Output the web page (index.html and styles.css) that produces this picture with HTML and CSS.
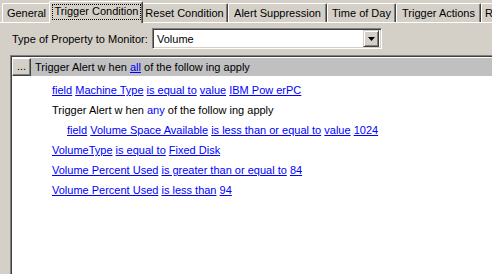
FILE: index.html
```html
<!DOCTYPE html>
<html lang="en">
<head>
    <meta charset="UTF-8">
    <title>Trigger Condition</title>
    <link rel="stylesheet" href="styles.css">
</head>
<body>
    <div class="tabs">
        <div class="tab">General</div>
        <div class="tab active"><span class="focus">Trigger Condition</span></div>
        <div class="tab">Reset Condition</div>
        <div class="tab">Alert Suppression</div>
        <div class="tab">Time of Day</div>
        <div class="tab">Trigger Actions</div>
        <div class="tab">R</div>
    </div>

    <div class="page">
        <div class="monitor">
            <span class="monitor-label">Type of Property to Monitor:</span>
            <div class="combo">
                <span class="combo-text">Volume</span>
                <span class="combo-btn">
                    <svg width="7" height="4" viewBox="0 0 7 4"><path d="M0 0H7L3.5 4Z" fill="#000"/></svg>
                </span>
            </div>
        </div>

        <div class="rules">
            <div class="rules-head">
                <span class="more">...</span>
                <span class="head-text">Trigger Alert w hen <a href="#">all</a> of the follow ing apply</span>
            </div>
            <div class="rules-body">
                <p class="rule"><a href="#">field</a> <a href="#">Machine Type</a> <a href="#">is equal to</a> <a href="#">value</a> <a href="#">IBM Pow erPC</a></p>
                <p class="rule">Trigger Alert w hen <a href="#" class="plain">any</a> of the follow ing apply</p>
                <p class="rule nested"><a href="#">field</a> <a href="#">Volume Space Available</a> <a href="#">is less than or equal to</a> <a href="#">value</a> <a href="#">1024</a></p>
                <p class="rule"><a href="#">VolumeType</a> <a href="#">is equal to</a> <a href="#">Fixed Disk</a></p>
                <p class="rule"><a href="#">Volume Percent Used</a> <a href="#">is greater than or equal to</a> <a href="#">84</a></p>
                <p class="rule"><a href="#">Volume Percent Used</a> <a href="#">is less than</a> <a href="#">94</a></p>
            </div>
        </div>
    </div>
</body>
</html>
```

FILE: styles.css
```css
body {
    margin: 0;
    height: 274px;
    overflow: hidden;
    background-color: #d4d0c8;
    font-family: "Liberation Sans", Arial, sans-serif;
    font-size: 11px;
    color: #000;
}

.tabs {
    display: flex;
    align-items: flex-end;
    height: 22px;
    padding-left: 2px;
    white-space: nowrap;
}

.tab {
    box-sizing: border-box;
    height: 19px;
    flex-shrink: 0;
    padding-top: 3px;
    text-align: center;
    border-top: 1px solid #fff;
    border-left: 1px solid #fff;
    border-right: 1px solid #404040;
    box-shadow: inset -1px 0 #808080;
    border-radius: 2px 2px 0 0;
    background-color: #d4d0c8;
}

.tab:nth-child(1) { width: 49px; }
.tab:nth-child(2) { width: 90px; }
.tab:nth-child(3) { width: 87px; }
.tab:nth-child(4) { width: 99px; }
.tab:nth-child(5) { width: 69px; }
.tab:nth-child(6) { width: 85px; }
.tab:nth-child(7) { width: 20px; text-align: left; padding-left: 3px; }

.tab.active {
    position: relative;
    z-index: 1;
    height: 22px;
    width: 94px;
    margin: 0 -2px -1px;
    padding: 2px 1px 0 2px;
}

.focus {
    display: block;
    height: 16px;
    line-height: 15px;
    outline: 1px dotted #000;
    outline-offset: -1px;
}

.page {
    border-top: 1px solid #fff;
    height: 251px;
}

.monitor {
    display: flex;
    align-items: center;
    margin-top: 5px;
    padding-left: 12px;
}

.monitor-label {
    width: 140px;
}

.combo {
    box-sizing: border-box;
    display: flex;
    align-items: center;
    justify-content: space-between;
    width: 230px;
    height: 21px;
    padding: 2px;
    background-color: #fff;
    border: 1px solid;
    border-color: #808080 #fff #fff #808080;
    box-shadow: inset 1px 1px #404040, inset -1px -1px #d4d0c8;
}

.combo-text {
    padding-left: 2px;
}

.combo-btn {
    box-sizing: border-box;
    display: flex;
    align-items: center;
    justify-content: center;
    width: 16px;
    height: 17px;
    background-color: #d4d0c8;
    border: 1px solid;
    border-color: #d4d0c8 #404040 #404040 #d4d0c8;
    box-shadow: inset 1px 1px #fff, inset -1px -1px #808080;
}

.rules {
    margin: 6px 0 0 10px;
    height: 230px;
    background-color: #fff;
    border-top: 1px solid #808080;
    border-left: 1px solid #808080;
    box-shadow: inset 1px 1px #404040;
}

.rules-head {
    display: flex;
    align-items: center;
    height: 18px;
    margin: 2px 0 0 1px;
    background-color: #c0c0c0;
}

.more {
    box-sizing: border-box;
    width: 19px;
    height: 18px;
    line-height: 14px;
    text-align: center;
    background-color: #d4d0c8;
    border: 1px solid;
    border-color: #fff #404040 #404040 #fff;
    box-shadow: inset -1px -1px #808080;
}

.head-text {
    padding-left: 4px;
}

.rules-body {
    padding: 4px 0 0 41px;
}

.rule {
    margin: 0;
    height: 20px;
    line-height: 20px;
    white-space: nowrap;
}

.rule.nested {
    padding-left: 15px;
}

a {
    color: #0000ff;
    text-decoration: underline;
}

a.plain {
    text-decoration: none;
}
```
